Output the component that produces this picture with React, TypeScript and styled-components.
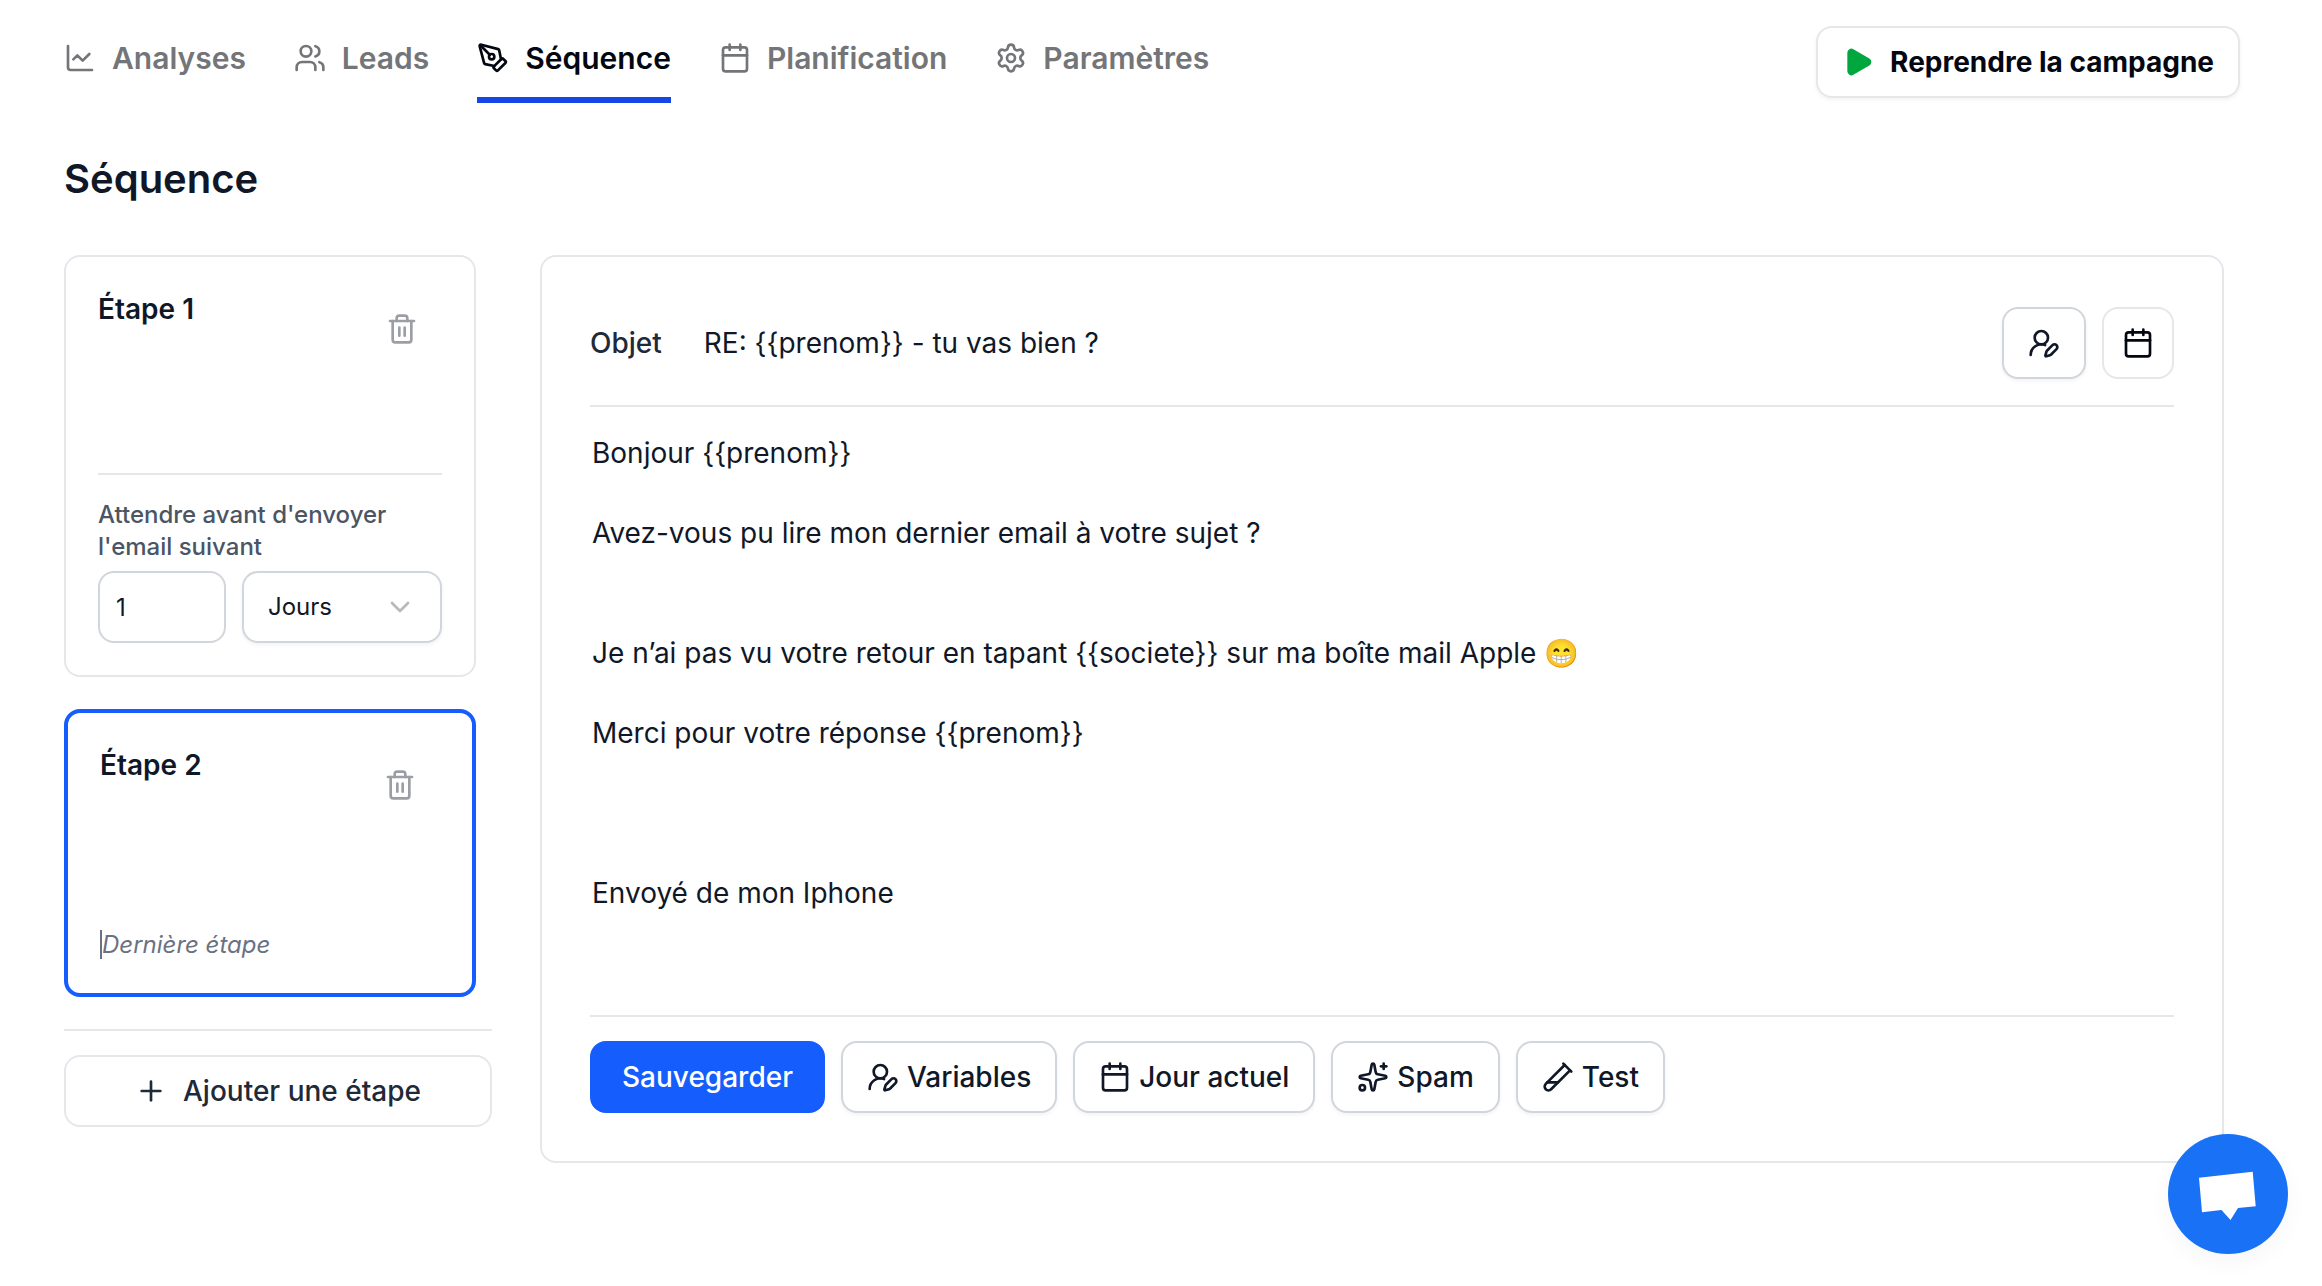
import React from "react";
import styled, { createGlobalStyle, css } from "styled-components";
import {
  Calendar,
  ChartLine,
  ChevronDown,
  PenTool,
  Play,
  Plus,
  Settings,
  Sparkles,
  TestTubeDiagonal,
  Trash2,
  UserRoundPen,
  Users,
} from "lucide-react";

const colors = {
  ink: "#101828",
  inkStrong: "#030712",
  text: "#1e2939",
  muted: "#747578",
  label: "#4a5565",
  hint: "#6a7282",
  icon: "#9c9ea6",
  line: "#e5e7eb",
  field: "#d1d5dc",
  blue: "#155dfc",
  blueDark: "#1447e6",
  green: "#00a63e",
  chat: "#1972f5",
};

const GlobalStyle = createGlobalStyle`
  *, *::before, *::after { box-sizing: border-box; }
  body {
    margin: 0;
    background: #ffffff;
    color: ${colors.ink};
    font-family: Inter, "Liberation Sans", sans-serif;
    font-size: 28px;
    line-height: 40px;
    -webkit-font-smoothing: antialiased;
  }
  button, input, select, textarea { font: inherit; color: inherit; margin: 0; }
  h1, h2, p { margin: 0; }
`;

const Page = styled.div`
  display: flex;
  flex-direction: column;
  gap: 48px;
  padding: 26px 82px 32px 64px;
`;

const Header = styled.header`
  display: flex;
  justify-content: space-between;
  align-items: flex-start;
`;

const Tabs = styled.nav`
  display: flex;
  gap: 48px;
  padding-top: 12px;
`;

const Tab = styled.a<{ $active?: boolean }>`
  display: flex;
  align-items: center;
  gap: 16px;
  padding-bottom: 19px;
  border-bottom: 6px solid ${(p) => (p.$active ? colors.blueDark : "transparent")};
  color: ${(p) => (p.$active ? colors.inkStrong : colors.muted)};
  font-size: 30px;
  font-weight: 600;
  text-decoration: none;
`;

const Button = styled.button<{ $variant?: "primary" | "soft" | "plain"; $square?: boolean }>`
  display: flex;
  align-items: center;
  justify-content: center;
  gap: 8px;
  height: 72px;
  padding: 0 24px;
  border: 2px solid ${colors.field};
  border-radius: 16px;
  background: #ffffff;
  color: ${colors.ink};
  font-weight: 500;
  white-space: nowrap;
  cursor: pointer;
  box-shadow: 0 2px 4px rgba(0, 0, 0, 0.05);

  ${(p) =>
    p.$variant === "primary" &&
    css`
      padding: 0 30px;
      border-color: ${colors.blue};
      background: ${colors.blue};
      color: #ffffff;
      box-shadow: none;
    `}
  ${(p) =>
    (p.$variant === "soft" || p.$variant === "plain") &&
    css`
      border-color: ${colors.line};
    `}
  ${(p) => p.$variant === "plain" && css`box-shadow: none;`}
  ${(p) =>
    p.$square &&
    css`
      width: 72px;
      padding: 0;
      color: ${colors.inkStrong};
    `}
`;

const ResumeButton = styled(Button)`
  gap: 16px;
  color: ${colors.inkStrong};
  font-weight: 700;

  svg { color: ${colors.green}; }
`;

const AddButton = styled(Button)`
  gap: 16px;
  color: ${colors.text};
`;

const Content = styled.main`
  display: flex;
  flex-direction: column;
  gap: 48px;
  padding-right: 16px;
`;

const Title = styled.h1`
  font-size: 40px;
  line-height: 56px;
  font-weight: 600;
`;

const Columns = styled.div`
  display: grid;
  grid-template-columns: 428px 1fr;
  gap: 48px;
  align-items: start;
`;

const Sidebar = styled.aside`
  display: flex;
  flex-direction: column;
  gap: 32px;
`;

const StepList = styled.div`
  display: flex;
  flex-direction: column;
  gap: 32px;
  padding-right: 16px;
`;

const SidebarFooter = styled.div`
  display: flex;
  flex-direction: column;
  padding-top: 24px;
  border-top: 2px solid ${colors.line};
`;

const StepCard = styled.section<{ $selected?: boolean }>`
  padding: 32px;
  border: ${(p) => (p.$selected ? `4px solid ${colors.blue}` : `2px solid ${colors.line}`)};
  border-radius: 16px;
`;

const StepHead = styled.div`
  display: flex;
  justify-content: space-between;
  align-items: flex-start;
  height: 184px;
`;

const StepTitle = styled.h2`
  font-size: 28px;
  line-height: 40px;
  font-weight: 600;
`;

const DeleteButton = styled.button`
  display: flex;
  padding: 24px;
  border: 0;
  background: none;
  color: ${colors.icon};
  cursor: pointer;
`;

const Delay = styled.div`
  display: grid;
  grid-template-columns: 128px 1fr;
  gap: 8px 16px;
  padding-top: 24px;
  border-top: 2px solid ${colors.line};
  font-size: 24px;
  line-height: 32px;
`;

const DelayLabel = styled.label`
  grid-column: 1 / -1;
  color: ${colors.label};
  font-weight: 500;
`;

const DelayInput = styled.input`
  width: 100%;
  height: 72px;
  padding: 0 16px;
  border: 2px solid ${colors.field};
  border-radius: 16px;
  background: #ffffff;
`;

const SelectBox = styled.div`
  display: grid;
  align-items: center;

  select, svg { grid-area: 1 / 1; }
  svg {
    justify-self: end;
    margin-right: 26px;
    opacity: 0.5;
    color: ${colors.muted};
    pointer-events: none;
  }
`;

const Select = styled.select`
  appearance: none;
  width: 100%;
  height: 72px;
  padding: 0 24px;
  border: 2px solid ${colors.field};
  border-radius: 16px;
  background: #ffffff;
  box-shadow: 0 2px 4px rgba(0, 0, 0, 0.05);
`;

const LastStep = styled.p`
  position: relative;
  padding-left: 2px;
  color: ${colors.hint};
  font-size: 24px;
  line-height: 32px;
  font-style: italic;

  &::before {
    content: "";
    position: absolute;
    left: 0;
    top: 1px;
    width: 2px;
    height: 29px;
    background: ${colors.hint};
  }
`;

const Editor = styled.section`
  display: flex;
  flex-direction: column;
  padding: 48px;
  border: 2px solid ${colors.line};
  border-radius: 16px;
`;

const SubjectRow = styled.div`
  display: flex;
  align-items: center;
  gap: 16px;
  height: 102px;
  padding-bottom: 24px;
  border-bottom: 2px solid ${colors.line};
`;

const SubjectLabel = styled.label`
  padding-right: 24px;
  color: ${colors.text};
  font-weight: 500;
`;

const SubjectInput = styled.input`
  flex: 1;
  min-width: 0;
  padding: 0;
  border: 2px solid transparent;
  background: none;
  outline: none;
`;

const Body = styled.textarea`
  display: block;
  height: 560px;
  margin: 24px 0;
  padding: 0;
  border: 2px solid transparent;
  background: none;
  outline: none;
  resize: none;
`;

const Actions = styled.div`
  display: flex;
  flex-wrap: wrap;
  gap: 16px;
  padding-top: 24px;
  border-top: 2px solid ${colors.line};
`;

const ChatButton = styled.button`
  position: fixed;
  right: 34px;
  bottom: 32px;
  width: 120px;
  height: 120px;
  padding: 0;
  border: 0;
  border-radius: 50%;
  background: ${colors.chat};
  box-shadow: 0 8px 24px rgba(0, 0, 0, 0.04);
  cursor: pointer;

  svg { display: block; }
`;

const tabs = [
  { label: "Analyses", Icon: ChartLine },
  { label: "Leads", Icon: Users },
  { label: "Séquence", Icon: PenTool, active: true },
  { label: "Planification", Icon: Calendar },
  { label: "Paramètres", Icon: Settings },
];

const actions = [
  { label: "Variables", Icon: UserRoundPen },
  { label: "Jour actuel", Icon: Calendar },
  { label: "Spam", Icon: Sparkles },
  { label: "Test", Icon: TestTubeDiagonal },
];

const message = [
  "Bonjour {{prenom}}",
  "",
  "Avez-vous pu lire mon dernier email à votre sujet ?",
  "",
  "",
  "Je n’ai pas vu votre retour en tapant {{societe}} sur ma boîte mail Apple 😁",
  "",
  "Merci pour votre réponse {{prenom}}",
  "",
  "",
  "",
  "Envoyé de mon Iphone",
].join("\n");

function StepHeader({ title }: { title: string }) {
  return (
    <StepHead>
      <StepTitle>{title}</StepTitle>
      <DeleteButton type="button" aria-label={`Supprimer ${title}`}>
        <Trash2 size={32} />
      </DeleteButton>
    </StepHead>
  );
}

export default function App() {
  return (
    <>
      <GlobalStyle />
      <Page>
        <Header>
          <Tabs>
            {tabs.map(({ label, Icon, active }) => (
              <Tab key={label} href="#" $active={active} aria-current={active ? "page" : undefined}>
                <Icon size={32} />
                {label}
              </Tab>
            ))}
          </Tabs>
          <ResumeButton type="button" $variant="soft">
            <Play size={32} fill="currentColor" />
            Reprendre la campagne
          </ResumeButton>
        </Header>

        <Content>
          <Title>Séquence</Title>
          <Columns>
            <Sidebar>
              <StepList>
                <StepCard>
                  <StepHeader title="Étape 1" />
                  <Delay>
                    <DelayLabel htmlFor="delay">Attendre avant d'envoyer l'email suivant</DelayLabel>
                    <DelayInput id="delay" type="text" inputMode="numeric" defaultValue="1" />
                    <SelectBox>
                      <Select aria-label="Unité" defaultValue="Jours">
                        <option>Jours</option>
                      </Select>
                      <ChevronDown size={32} />
                    </SelectBox>
                  </Delay>
                </StepCard>
                <StepCard $selected>
                  <StepHeader title="Étape 2" />
                  <LastStep>Dernière étape</LastStep>
                </StepCard>
              </StepList>
              <SidebarFooter>
                <AddButton type="button" $variant="plain">
                  <Plus size={32} />
                  Ajouter une étape
                </AddButton>
              </SidebarFooter>
            </Sidebar>

            <Editor>
              <SubjectRow>
                <SubjectLabel htmlFor="subject">Objet</SubjectLabel>
                <SubjectInput id="subject" type="text" defaultValue="RE: {{prenom}} - tu vas bien ?" />
                <Button type="button" aria-label="Variables">
                  <UserRoundPen size={32} />
                </Button>
                <Button type="button" $variant="plain" $square aria-label="Jour actuel">
                  <Calendar size={32} />
                </Button>
              </SubjectRow>
              <Body aria-label="Message" defaultValue={message} spellCheck={false} />
              <Actions>
                <Button type="button" $variant="primary">Sauvegarder</Button>
                {actions.map(({ label, Icon }) => (
                  <Button key={label} type="button">
                    <Icon size={32} />
                    {label}
                  </Button>
                ))}
              </Actions>
            </Editor>
          </Columns>
        </Content>
      </Page>

      <ChatButton type="button" aria-label="Ouvrir le chat">
        <svg width="120" height="120" viewBox="0 0 120 120" aria-hidden="true">
          <path d="M31 43.7 84.7 37.7 87.7 72.3 70 74 62.5 86 53.5 76 34 78.3Z" fill="#ffffff" />
        </svg>
      </ChatButton>
    </>
  );
}
